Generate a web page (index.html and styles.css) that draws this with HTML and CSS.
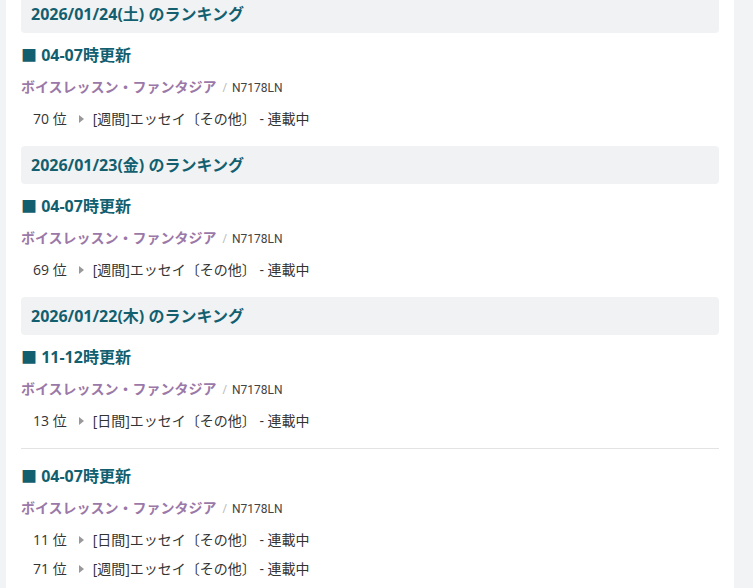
FILE: index.html
```html
<!DOCTYPE html>
<html lang="ja">
<head>
  <meta charset="UTF-8" />
  <meta name="viewport" content="width=device-width, initial-scale=1.0" />
  <title>ランキング履歴</title>
  <link rel="stylesheet" href="styles.css">
</head>
<body>
  <div class="main">
    <div class="history">

      <h2 class="day-head">2026/01/24(土) のランキング</h2>
      <div class="update">
        <h3>■ 04-07時更新</h3>
        <p class="novel"><a href="#">ボイスレッスン・ファンタジア</a><span class="sep">/</span><span class="ncode">N7178LN</span></p>
        <ul class="rank">
          <li><span class="pos">70 位</span><span class="arrow"></span>[週間]エッセイ〔その他〕 - 連載中</li>
        </ul>
      </div>

      <h2 class="day-head">2026/01/23(金) のランキング</h2>
      <div class="update">
        <h3>■ 04-07時更新</h3>
        <p class="novel"><a href="#">ボイスレッスン・ファンタジア</a><span class="sep">/</span><span class="ncode">N7178LN</span></p>
        <ul class="rank">
          <li><span class="pos">69 位</span><span class="arrow"></span>[週間]エッセイ〔その他〕 - 連載中</li>
        </ul>
      </div>

      <h2 class="day-head">2026/01/22(木) のランキング</h2>
      <div class="update">
        <h3>■ 11-12時更新</h3>
        <p class="novel"><a href="#">ボイスレッスン・ファンタジア</a><span class="sep">/</span><span class="ncode">N7178LN</span></p>
        <ul class="rank">
          <li><span class="pos">13 位</span><span class="arrow"></span>[日間]エッセイ〔その他〕 - 連載中</li>
        </ul>
      </div>
      <div class="update">
        <h3>■ 04-07時更新</h3>
        <p class="novel"><a href="#">ボイスレッスン・ファンタジア</a><span class="sep">/</span><span class="ncode">N7178LN</span></p>
        <ul class="rank">
          <li><span class="pos">11 位</span><span class="arrow"></span>[日間]エッセイ〔その他〕 - 連載中</li>
          <li><span class="pos">71 位</span><span class="arrow"></span>[週間]エッセイ〔その他〕 - 連載中</li>
        </ul>
      </div>

    </div>
  </div>
</body>
</html>
```

FILE: styles.css
```css
:root {
  --page-bg: #f2f3f5;
  --head-bg: #f1f2f4;
  --teal: #125f70;
  --novel: #9a78a8;
  --text: #333;
  --line: #e3e3e3;
}

body {
  margin: 0;
  padding: 0;
  background: var(--page-bg);
  font-family: "Open Sans", "Noto Sans CJK JP", sans-serif;
  color: var(--text);
  overflow: hidden;
}

.main {
  margin: 0 19px 0 6px;
  background: #fff;
  min-height: 100vh;
  padding: 0 15px;
}

.history {
  margin-top: -5px;
}

.day-head {
  margin: 0;
  height: 38px;
  line-height: 38px;
  padding-left: 10px;
  background: var(--head-bg);
  border-radius: 4px;
  color: var(--teal);
  font-size: 16px;
  font-weight: bold;
}

.update {
  padding-bottom: 17px;
}

.update + .update {
  border-top: 1px solid var(--line);
}

.update h3 {
  margin: 11px 0;
  height: 22px;
  line-height: 22px;
  font-size: 16px;
  color: var(--teal);
}

.update + .update h3 {
  margin-top: 16px;
}

.novel {
  margin: 0 0 12px;
  height: 20px;
  line-height: 20px;
  font-size: 14px;
}

.novel a {
  color: var(--novel);
  text-decoration: none;
  font-weight: 600;
}

.sep {
  color: #bbb;
  font-size: 12px;
  margin: 0 5px 0 6px;
}

.ncode {
  color: #444;
  font-family: Roboto, "Open Sans", sans-serif;
  font-size: 12px;
}

.rank {
  list-style: none;
  margin: 0;
  padding: 0 0 0 12px;
  font-size: 14px;
}

.rank li {
  height: 20px;
  line-height: 20px;
}

.rank li + li {
  margin-top: 9px;
}

.pos {
  display: inline-block;
}

.arrow {
  display: inline-block;
  width: 0;
  height: 0;
  border-left: 5px solid #999;
  border-top: 4px solid transparent;
  border-bottom: 4px solid transparent;
  margin: 0 9px 0 12px;
  vertical-align: 1px;
}
```
